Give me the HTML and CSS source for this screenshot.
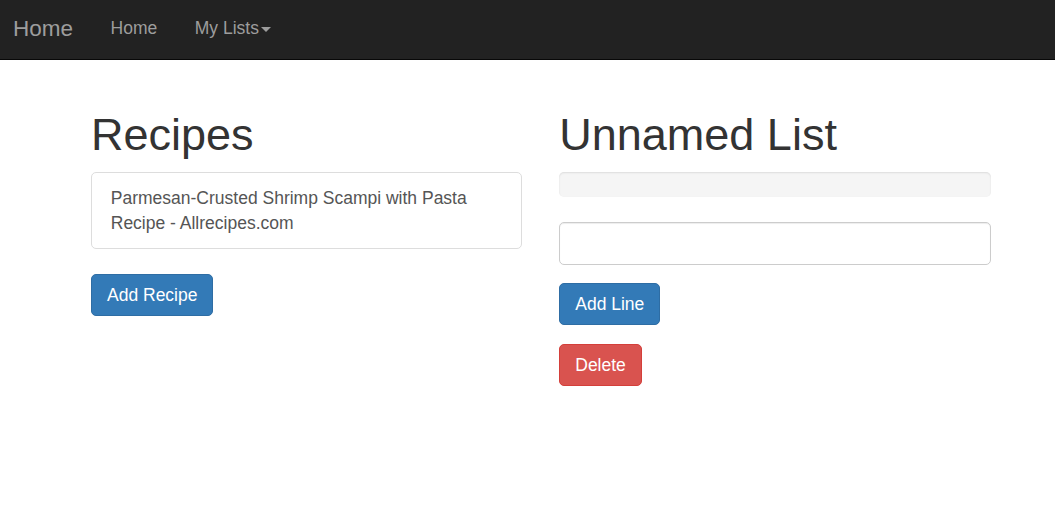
FILE: index.html
```html
<!DOCTYPE html>
<html>
<head>
<meta charset="utf-8">
<link rel="stylesheet" href="styles.css">
</head>
<body>
<nav class="navbar">
  <a class="brand" href="#">Home</a>
  <a class="nav-link" href="#">Home</a>
  <a class="nav-link" href="#">My Lists<span class="caret"></span></a>
</nav>
<div class="container">
  <div class="row">
    <div class="col">
      <h1 class="title">Recipes</h1>
      <div class="list-group">
        <a class="list-group-item" href="#">Parmesan-Crusted Shrimp Scampi with Pasta Recipe - Allrecipes.com</a>
      </div>
      <button class="btn btn-primary">Add Recipe</button>
    </div>
    <div class="col">
      <h1 class="title">Unnamed List</h1>
      <div class="progress"></div>
      <div class="form-group">
        <input class="form-control" type="text">
      </div>
      <div class="form-group">
        <button class="btn btn-primary">Add Line</button>
      </div>
      <div class="form-group">
        <button class="btn btn-danger">Delete</button>
      </div>
    </div>
  </div>
</div>
</body>
</html>
```
FILE: styles.css
```css
* { box-sizing: border-box; }
html, body { margin: 0; padding: 0; }
body {
  font-family: "Liberation Sans", Arial, sans-serif;
  font-size: 17.5px;
  line-height: 25px;
  color: #333;
  background: #fff;
}
a { text-decoration: none; }

.navbar {
  height: 60px;
  background: #222;
  border-bottom: 1px solid #080808;
  display: flex;
  align-items: center;
  margin-bottom: 25px;
}
.brand {
  color: #9d9d9d;
  font-size: 22.5px;
  line-height: 25px;
  padding: 0 18.75px 3px 13px;
}
.nav-link {
  color: #9d9d9d;
  font-size: 17.5px;
  line-height: 25px;
  padding: 0 18.75px 3px;
  display: flex;
  align-items: center;
}
.caret {
  display: inline-block;
  width: 0;
  height: 0;
  margin-left: 2px;
  margin-top: 2px;
  border-top: 5px solid #9d9d9d;
  border-left: 5px solid transparent;
  border-right: 5px solid transparent;
}

.container {
  width: 937px;
  margin-left: 72px;
  padding: 0 18.5px 0 19px;
}
.row {
  display: grid;
  grid-template-columns: 1fr 1fr;
  column-gap: 37px;
}
.col { min-width: 0; }

.title {
  font-size: 45px;
  font-weight: 500;
  line-height: 1.1;
  margin: 25px 0 12.5px;
  color: #333;
}

.list-group {
  margin-bottom: 25px;
}
.list-group-item {
  display: block;
  padding: 12.5px 18.75px;
  border: 1px solid #ddd;
  border-radius: 5px;
  color: #555;
  background: #fff;
}

.btn {
  display: inline-block;
  font-family: inherit;
  font-size: 17.5px;
  line-height: 25px;
  padding: 7.5px 15px;
  border: 1px solid transparent;
  border-radius: 5px;
  color: #fff;
  cursor: pointer;
  margin: 0;
}
.btn-primary { background: #337ab7; border-color: #2e6da4; }
.btn-danger { background: #d9534f; border-color: #d43f3a; }

.progress {
  height: 25px;
  margin-bottom: 25px;
  background: #f5f5f5;
  border-radius: 5px;
  box-shadow: inset 0 1px 2px rgba(0,0,0,.1);
}
.form-group { margin-bottom: 18.75px; }
.form-control {
  display: block;
  width: 100%;
  height: 42.5px;
  padding: 7.5px 15px;
  font-family: inherit;
  font-size: 17.5px;
  color: #555;
  background: #fff;
  border: 1px solid #ccc;
  border-radius: 5px;
  box-shadow: inset 0 1px 1px rgba(0,0,0,.075);
  margin: 0;
}
```
